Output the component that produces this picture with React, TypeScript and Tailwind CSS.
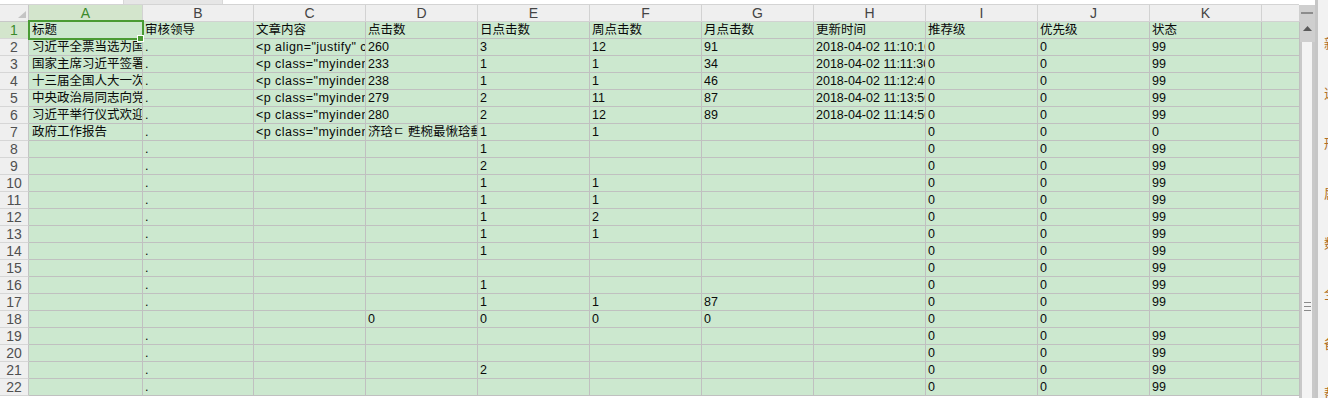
import React from 'react'

// column widths include the 1px right gridline
const COLS = [
  'w-[114px]',
  'w-[111px]',
  'w-[112px]',
  'w-[112px]',
  'w-[112px]',
  'w-[112px]',
  'w-[112px]',
  'w-[112px]',
  'w-[112px]',
  'w-[112px]',
  'w-[112px]',
  'w-[38px]',
]
const LETTERS = ['A', 'B', 'C', 'D', 'E', 'F', 'G', 'H', 'I', 'J', 'K', '']

const P1 = '<p align="justify" class="myindent">'
const P2 = '<p class="myindent">'

const ROWS: string[][] = [
  ['标题', '审核领导', '文章内容', '点击数', '日点击数', '周点击数', '月点击数', '更新时间', '推荐级', '优先级', '状态', ''],
  ['习近平全票当选为国家主席', '.', P1, '260', '3', '12', '91', '2018-04-02 11:10:10', '0', '0', '99', ''],
  ['国家主席习近平签署主席令', '.', P2, '233', '1', '1', '34', '2018-04-02 11:11:30', '0', '0', '99', ''],
  ['十三届全国人大一次会议', '.', P2, '238', '1', '1', '46', '2018-04-02 11:12:40', '0', '0', '99', ''],
  ['中央政治局同志向党中央述职', '.', P2, '279', '2', '11', '87', '2018-04-02 11:13:50', '0', '0', '99', ''],
  ['习近平举行仪式欢迎来访', '.', P2, '280', '2', '12', '89', '2018-04-02 11:14:50', '0', '0', '99', ''],
  ['政府工作报告', '.', P2, '济琀ㄷ 甦椀最愀琀甀', '1', '1', '', '', '0', '0', '0', ''],
  ['', '.', '', '', '1', '', '', '', '0', '0', '99', ''],
  ['', '.', '', '', '2', '', '', '', '0', '0', '99', ''],
  ['', '.', '', '', '1', '1', '', '', '0', '0', '99', ''],
  ['', '.', '', '', '1', '1', '', '', '0', '0', '99', ''],
  ['', '.', '', '', '1', '2', '', '', '0', '0', '99', ''],
  ['', '.', '', '', '1', '1', '', '', '0', '0', '99', ''],
  ['', '.', '', '', '1', '', '', '', '0', '0', '99', ''],
  ['', '.', '', '', '', '', '', '', '0', '0', '99', ''],
  ['', '.', '', '', '1', '', '', '', '0', '0', '99', ''],
  ['', '.', '', '', '1', '1', '87', '', '0', '0', '99', ''],
  ['', '', '', '0', '0', '0', '0', '', '0', '0', '', ''],
  ['', '.', '', '', '', '', '', '', '0', '0', '99', ''],
  ['', '.', '', '', '', '', '', '', '0', '0', '99', ''],
  ['', '.', '', '', '2', '', '', '', '0', '0', '99', ''],
  ['', '.', '', '', '', '', '', '', '0', '0', '99', ''],
]

const SIDE = ['新', '选', '形', '属', '数', '全', '备', '帮']

function CornerCell() {
  return (
    <div className="flex h-[17px] w-[29px] shrink-0 items-end justify-end border-r border-b border-[#c8c8c8] bg-[#efefef] pr-[2px] pb-[3px]">
      <svg width="8" height="7" viewBox="0 0 8 7">
        <polygon points="8,0 8,7 0,7" fill="#c4c4c4" />
      </svg>
    </div>
  )
}

export default function App() {
  return (
    <div className="flex h-[398px] w-[1328px] overflow-hidden bg-white font-['Liberation_Sans','Noto_Sans_CJK_SC',sans-serif]">
      <div className="flex w-[1299px] shrink-0 flex-col">
        <div className="flex h-[5px] shrink-0 border-b border-[#d4d4d4]">
          <div className="w-[123px]" />
          <div className="w-[100px] border-x border-[#d8d8d8] bg-[#e6e6e6]" />
        </div>

        <div className="flex shrink-0">
          <CornerCell />
          {COLS.map((w, i) => (
            <div
              key={i}
              className={
                (i === 0
                  ? 'bg-[#d3e5cc] text-[#3b8a2a] '
                  : 'bg-[#efefef] text-[#444] ') +
                w +
                ' h-[17px] shrink-0 border-r border-b border-[#d2d2d2] text-center text-[14px] leading-[16px]'
              }
            >
              {LETTERS[i]}
            </div>
          ))}
        </div>

        {ROWS.map((row, r) => (
          <div key={r} className="flex shrink-0">
            <div
              className={
                (r === 0
                  ? 'bg-[#d3e5cc] text-[#3b8a2a] '
                  : 'bg-[#efefef] text-[#505050] ') +
                'h-[17px] w-[29px] shrink-0 border-r border-b border-r-[#c4c4c4] border-b-[#d6d6d6] text-center text-[14px] leading-[17px]'
              }
            >
              {r + 1}
            </div>
            {row.map((v, c) => (
              <div
                key={c}
                className={
                  COLS[c] +
                  ' relative h-[17px] shrink-0 border-r border-b border-[#c0c0c0] bg-[#cce8cf]'
                }
              >
                <div
                  className={
                    (c === 0 ? 'pl-[3px] ' : 'pl-[2px] ') +
                    (c === 2 && r > 0 ? 'tracking-[0.45px] ' : '') +
                    'h-[16px] overflow-hidden whitespace-nowrap text-[12.5px] leading-[17px] text-[#0a0a0a]'
                  }
                >
                  {v}
                </div>
                {r === 0 && c === 0 ? (
                  <>
                    <div className="absolute -top-[2px] -left-[1px] z-10 h-[20px] w-[116px] border-2 border-[#4a9b34]" />
                    <div className="absolute top-[13px] left-[108px] z-20 h-[7px] w-[7px] border border-white bg-[#4a9b34]" />
                  </>
                ) : null}
              </div>
            ))}
          </div>
        ))}
      </div>

      {/* vertical scrollbar */}
      <div className="flex w-[16px] shrink-0 flex-col">
        <div className="h-[5px] shrink-0 bg-white" />
        <div className="flex h-[37px] shrink-0 flex-col items-center bg-[#cfcfcf] pt-[7px]">
          <div className="h-[2px] w-[12px] bg-[#8c8c8c]" />
          <svg className="mt-[12px]" width="9" height="5" viewBox="0 0 9 5">
            <polygon points="4.5,0 9,5 0,5" fill="#5a5a5a" />
          </svg>
        </div>
        <div className="flex flex-1 flex-col items-center border-x-[3px] border-[#c9c9c9] bg-[#f4f4f4] pt-[260px]">
          <div className="flex flex-col gap-[3px]">
            <div className="h-[1px] w-[7px] bg-[#8a8a8a]" />
            <div className="h-[1px] w-[7px] bg-[#8a8a8a]" />
            <div className="h-[1px] w-[7px] bg-[#8a8a8a]" />
          </div>
        </div>
      </div>
      <div className="w-[3px] shrink-0 bg-[#c6c6c6]" />

      {/* side panel, cut off */}
      <div className="flex w-[10px] shrink-0 flex-col gap-[32px] overflow-hidden bg-[#f2f2f2] pt-[35px] pl-[6px]">
        {SIDE.map((s) => (
          <div key={s} className="text-[13px] leading-[18px] whitespace-nowrap text-[#b06e24]">
            {s}
          </div>
        ))}
      </div>
    </div>
  )
}
